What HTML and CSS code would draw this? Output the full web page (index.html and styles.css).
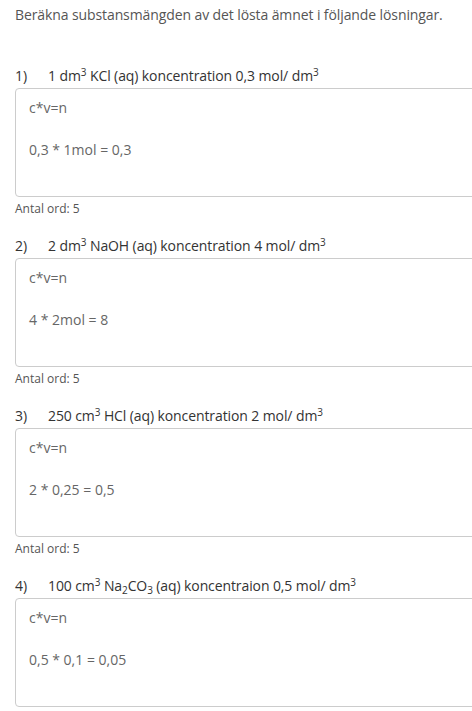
FILE: index.html
```html
<!DOCTYPE html>
<html lang="sv">
<head>
<meta charset="utf-8">
<link rel="stylesheet" href="styles.css">
</head>
<body>
<div class="page">
  <p class="intro">Beräkna substansmängden av det lösta ämnet i följande lösningar.</p>

  <div class="question">
    <div class="q-title"><span class="num">1)</span><span>1 dm<sup>3</sup> KCl (aq) koncentration 0,3 mol/ dm<sup>3</sup></span></div>
    <div class="answer"><div>c*v=n</div><div>&nbsp;</div><div>0,3 * 1mol = 0,3</div></div>
    <div class="count">Antal ord: 5</div>
  </div>

  <div class="question">
    <div class="q-title"><span class="num">2)</span><span>2 dm<sup>3</sup> NaOH (aq) koncentration 4 mol/ dm<sup>3</sup></span></div>
    <div class="answer"><div>c*v=n</div><div>&nbsp;</div><div>4 * 2mol = 8</div></div>
    <div class="count">Antal ord: 5</div>
  </div>

  <div class="question">
    <div class="q-title"><span class="num">3)</span><span>250 cm<sup>3</sup> HCl (aq) koncentration 2 mol/ dm<sup>3</sup></span></div>
    <div class="answer"><div>c*v=n</div><div>&nbsp;</div><div>2 * 0,25 = 0,5</div></div>
    <div class="count">Antal ord: 5</div>
  </div>

  <div class="question">
    <div class="q-title"><span class="num">4)</span><span>100 cm<sup>3</sup> Na<sub>2</sub>CO<sub>3</sub> (aq) koncentraion 0,5 mol/ dm<sup>3</sup></span></div>
    <div class="answer"><div>c*v=n</div><div>&nbsp;</div><div>0,5 * 0,1 = 0,05</div></div>
  </div>
</div>
</body>
</html>
```

FILE: styles.css
```css
html, body {
  margin: 0;
  padding: 0;
  background: #fff;
  overflow: hidden;
}
.page {
  padding: 5px 0 0 15px;
  font-family: "Open Sans", "Liberation Sans", sans-serif;
  color: #444;
  overflow: hidden;
}
.intro {
  margin: 0 0 41px 0;
  font-size: 14px;
  line-height: 20px;
  color: #555;
  letter-spacing: -0.1px;
}
.question {
  margin-bottom: 19px;
}
.q-title {
  display: flex;
  font-size: 14px;
  line-height: 20px;
  height: 20px;
  color: #333;
  margin-bottom: 2px;
  letter-spacing: -0.1px;
}
.num {
  width: 33px;
  flex: none;
}
sup, sub {
  font-size: 10px;
  line-height: 0;
}
sup { vertical-align: 5px; }
sub { vertical-align: -3px; }
.answer {
  box-sizing: border-box;
  height: 109px;
  width: 480px;
  border: 1px solid #ccc;
  border-radius: 4px;
  padding: 8px 13px;
  font-size: 14px;
  line-height: 21px;
  color: #666;
}
.count {
  margin-top: 4px;
  font-size: 12px;
  line-height: 16px;
  color: #555;
}
```
